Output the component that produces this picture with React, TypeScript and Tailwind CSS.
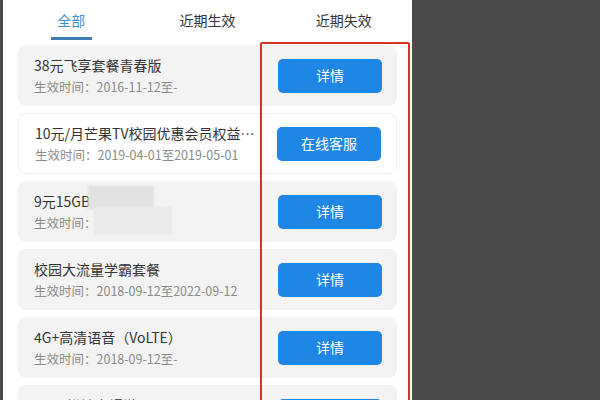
import React from "react";

type Item = { title: string; date: string; btn: string; white?: boolean; blur?: boolean };

const items: Item[] = [
  { title: "38元飞享套餐青春版", date: "生效时间：2016-11-12至-", btn: "详情" },
  { title: "10元/月芒果TV校园优惠会员权益（半年包）", date: "生效时间：2019-04-01至2019-05-01", btn: "在线客服", white: true },
  { title: "9元15GB专", date: "生效时间：2019-02", btn: "详情", blur: true },
  { title: "校园大流量学霸套餐", date: "生效时间：2018-09-12至2022-09-12", btn: "详情" },
  { title: "4G+高清语音（VoLTE）", date: "生效时间：2018-09-12至-", btn: "详情" },
  { title: "国际/港澳台漫游", date: "生效时间：2018-09-12至-", btn: "详情" },
];

const font = { fontFamily: '"Noto Sans CJK SC", "Noto Sans", sans-serif' };

export default function App() {
  return (
    <div className="w-[600px] h-[400px] overflow-hidden flex bg-[#4a4a4a]" style={font}>
      <div className="w-[3px] shrink-0 bg-[#4a4a4a]" />
      <div className="relative w-[409px] h-[400px] shrink-0 overflow-hidden bg-white">
        <div className="grid grid-cols-3 h-[45px]">
          <div className="flex flex-col items-center">
            <div className="mt-[9px] text-[14px] leading-[22px] text-[#3f8ec8]">全部</div>
            <div className="mt-[6px] w-[41px] h-[3px] bg-[#3e7db2]" />
          </div>
          <div className="flex flex-col items-center">
            <div className="mt-[9px] text-[14px] leading-[22px] text-[#333]">近期生效</div>
          </div>
          <div className="flex flex-col items-center">
            <div className="mt-[9px] text-[14px] leading-[22px] text-[#333]">近期失效</div>
          </div>
        </div>
        <div className="flex flex-col gap-[7px] px-[15px]">
          {items.map((it, i) => (
            <div
              key={i}
              className={
                "relative h-[61px] shrink-0 rounded-[8px] flex items-center pl-[16px] pr-[15px] " +
                (it.white ? "bg-white border border-[#f0f0f0]" : "bg-[#f3f3f3]")
              }
            >
              <div className="flex-1 min-w-0 pr-[20px] flex flex-col">
                <div className="truncate text-[14px] leading-[20px] text-[#333]">{it.title}</div>
                <div className="mt-[3px] truncate text-[12.5px] leading-[18px] text-[#8a8a8a]">{it.date}</div>
              </div>
              <div className="w-[104px] h-[34px] shrink-0 rounded-[5px] bg-[#1e86e4] text-white text-[14px] flex items-center justify-center">
                {it.btn}
              </div>
              {it.blur && (
                <>
                  <div className="absolute left-[70px] top-[5px] w-[66px] h-[24px] bg-[#e2e2e2] blur-[1px]" />
                  <div className="absolute left-[76px] top-[26px] w-[78px] h-[28px] bg-[#e9e9e9] blur-[1px]" />
                </>
              )}
            </div>
          ))}
        </div>
        <div className="absolute left-[257px] top-[42px] w-[150px] h-[380px] border-2 border-[#d63226] rounded-[2px]" />
      </div>
    </div>
  );
}
